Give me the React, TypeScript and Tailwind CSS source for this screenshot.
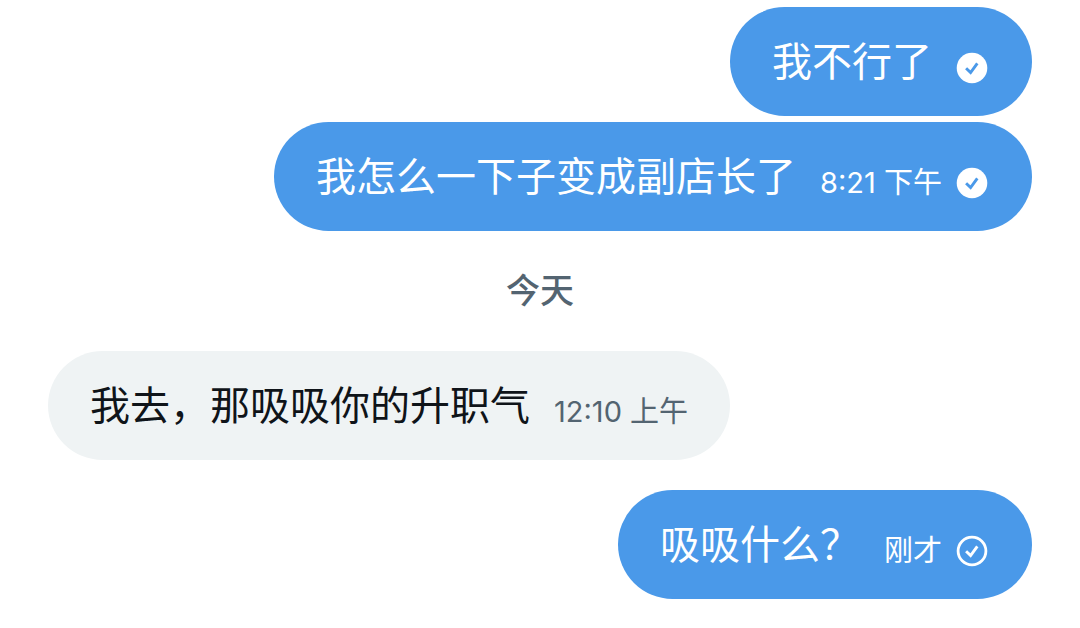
import React from "react";

type Receipt = "read" | "sent";

interface Message {
  text: string;
  time?: string;
  receipt?: Receipt;
}

function ReceiptIcon({ kind }: { kind: Receipt }) {
  const filled = kind === "read";
  return (
    <svg
      viewBox="0 0 32 32"
      className="size-8 shrink-0"
      role="img"
      aria-label={filled ? "已读" : "已发送"}
    >
      {filled ? (
        <circle cx="16" cy="16" r="15.3" fill="#fff" />
      ) : (
        <circle cx="16" cy="16" r="13.9" fill="none" stroke="#fff" strokeWidth="2.8" />
      )}
      <path
        d="M10.1 16.2l4.5 4.4 6.7-9.3"
        fill="none"
        stroke={filled ? "#4a99e9" : "#fff"}
        strokeWidth="2.9"
      />
    </svg>
  );
}

function Bubble({ message, own }: { message: Message; own?: boolean }) {
  return (
    <div
      className={
        own
          ? "flex items-center gap-6 self-end rounded-full bg-[#4a99e9] py-6 pl-[42px] pr-11 text-white"
          : "flex items-center gap-6 self-start rounded-full bg-[#eff3f4] py-6 px-[42px] text-[#0f1419]"
      }
    >
      <p className="pt-px text-[40px] leading-[60px]">{message.text}</p>
      <div className="flex items-center gap-3.5 pt-3">
        {message.time && (
          <time className={own ? "text-[29px] leading-10" : "text-[29px] leading-10 text-[#536471]"}>
            {message.time}
          </time>
        )}
        {message.receipt && <ReceiptIcon kind={message.receipt} />}
      </div>
    </div>
  );
}

export default function App() {
  return (
    <main
      lang="zh-CN"
      className="flex flex-col bg-white px-12 py-[7px] font-['Inter','Noto_Sans_CJK_SC',sans-serif]"
    >
      <section className="flex flex-col gap-1.5">
        <Bubble own message={{ text: "我不行了", receipt: "read" }} />
        <Bubble own message={{ text: "我怎么一下子变成副店长了", time: "8:21 下午", receipt: "read" }} />
      </section>
      <h2 className="my-10 text-center text-[34px] font-medium leading-10 text-[#536471]">今天</h2>
      <section className="flex flex-col gap-[30px]">
        <Bubble message={{ text: "我去，那吸吸你的升职气", time: "12:10 上午" }} />
        <Bubble own message={{ text: "吸吸什么？", time: "刚才", receipt: "sent" }} />
      </section>
    </main>
  );
}
